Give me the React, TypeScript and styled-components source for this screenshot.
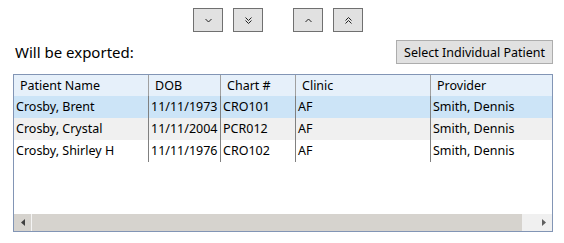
import React from "react";
import styled, {createGlobalStyle} from "styled-components";

const GlobalStyle = createGlobalStyle`
  body {
    margin: 0;
    background: #ffffff;
    font-family: "Segoe UI", "Noto Sans", sans-serif;
    color: #000000;
  }
`;

type Patient = {
  name: string;
  dob: string;
  chart: string;
  clinic: string;
  provider: string;
};

const patients: Patient[] = [
  {name: "Crosby, Brent", dob: "11/11/1973", chart: "CRO101", clinic: "AF", provider: "Smith, Dennis"},
  {name: "Crosby, Crystal", dob: "11/11/2004", chart: "PCR012", clinic: "AF", provider: "Smith, Dennis"},
  {name: "Crosby, Shirley H", dob: "11/11/1976", chart: "CRO102", clinic: "AF", provider: "Smith, Dennis"},
];

const columns = [
  {key: "name", title: "Patient Name", width: 135},
  {key: "dob", title: "DOB", width: 72},
  {key: "chart", title: "Chart #", width: 75},
  {key: "clinic", title: "Clinic", width: 135},
  {key: "provider", title: "Provider", width: 160},
] as const;

const Chevron = ({up, double}: {up?: boolean; double?: boolean}) => (
  <svg width="9" height="9" viewBox="0 0 9 9">
    <g fill="none" stroke="#222" strokeWidth="1" transform={up ? "rotate(180 4.5 4.5)" : undefined}>
      {double ? (
        <>
          <polyline points="1.5,1.5 4.5,4.5 7.5,1.5" />
          <polyline points="1.5,4.5 4.5,7.5 7.5,4.5" />
        </>
      ) : (
        <polyline points="1.5,3 4.5,6 7.5,3" />
      )}
    </g>
  </svg>
);

const App = () => {
  return (
    <Page>
      <GlobalStyle />
      <Toolbar>
        <ArrowButton><Chevron /></ArrowButton>
        <ArrowButton><Chevron double /></ArrowButton>
        <Spacer />
        <ArrowButton><Chevron up /></ArrowButton>
        <ArrowButton><Chevron up double /></ArrowButton>
      </Toolbar>
      <TitleRow>
        <Title>Will be exported:</Title>
        <SelectButton>Select Individual Patient</SelectButton>
      </TitleRow>
      <Grid>
        <Viewport>
          <HeadRow>
            {columns.map((c) => (
              <HeadCell key={c.key} $w={c.width}>{c.title}</HeadCell>
            ))}
          </HeadRow>
          {patients.map((p, i) => (
            <Row key={p.chart} $selected={i === 0} $alt={i % 2 === 1}>
              {columns.map((c) => (
                <Cell key={c.key} $w={c.width}>{p[c.key]}</Cell>
              ))}
            </Row>
          ))}
        </Viewport>
        <HScroll>
          <ScrollArrow $dark>
            <svg width="4" height="7" viewBox="0 0 4 7"><polygon points="4,0 0,3.5 4,7" fill="#404040" /></svg>
          </ScrollArrow>
          <Thumb />
          <Track />
          <ScrollArrow>
            <svg width="4" height="7" viewBox="0 0 4 7"><polygon points="0,0 4,3.5 0,7" fill="#606060" /></svg>
          </ScrollArrow>
        </HScroll>
      </Grid>
    </Page>
  );
};

const Page = styled.div`
  width: 564px;
  height: 243px;
  box-sizing: border-box;
  padding: 8px 11px 0 13px;
`;

const Toolbar = styled.div`
  display: flex;
  gap: 10px;
  padding-left: 180px;
`;

const Spacer = styled.div`
  width: 10px;
`;

const ArrowButton = styled.button`
  width: 30px;
  height: 24px;
  padding: 0;
  display: flex;
  align-items: center;
  justify-content: center;
  background: #e1e1e1;
  border: 1px solid #707070;
  border-radius: 0;
`;

const TitleRow = styled.div`
  display: flex;
  justify-content: space-between;
  align-items: flex-end;
  margin-top: 8px;
`;

const Title = styled.div`
  font-size: 15px;
  padding-left: 2px;
  padding-bottom: 2px;
`;

const SelectButton = styled.button`
  height: 24px;
  padding: 0 7px;
  font-family: inherit;
  font-size: 12.5px;
  color: #000;
  background: #e1e1e1;
  border: 1px solid #adadad;
  border-radius: 0;
`;

const Grid = styled.div`
  margin-top: 10px;
  height: 158px;
  box-sizing: border-box;
  border: 1px solid #8295b5;
  display: flex;
  flex-direction: column;
`;

const Viewport = styled.div`
  flex: 1;
  overflow: hidden;
`;

const HeadRow = styled.div`
  display: flex;
  height: 21px;
  background: #e6f0fa;
  width: max-content;
`;

const HeadCell = styled.div<{$w: number}>`
  width: ${(p) => p.$w}px;
  flex: none;
  box-sizing: border-box;
  border-right: 1px solid #a0a0a0;
  padding-left: 6px;
  font-size: 12.5px;
  line-height: 21px;
  white-space: nowrap;
`;

const Row = styled.div<{$selected?: boolean; $alt?: boolean}>`
  display: flex;
  height: 22px;
  width: max-content;
  background: ${(p) => (p.$selected ? "#cce4f7" : p.$alt ? "#f0f0f0" : "#ffffff")};
`;

const Cell = styled.div<{$w: number}>`
  width: ${(p) => p.$w}px;
  flex: none;
  box-sizing: border-box;
  border-right: 1px solid #808080;
  padding-left: 2px;
  font-size: 12.5px;
  line-height: 22px;
  white-space: nowrap;
  overflow: hidden;
`;

const HScroll = styled.div`
  display: flex;
  height: 17px;
  background: #f0f0f0;
`;

const ScrollArrow = styled.div<{$dark?: boolean}>`
  width: 17px;
  flex: none;
  display: flex;
  align-items: center;
  justify-content: center;
  background: ${(p) => (p.$dark ? "#d6d3ce" : "#f0f0f0")};
`;

const Thumb = styled.div`
  flex: 1;
  background: #d6d3ce;
  border-left: 1px solid #f4f4f4;
`;

const Track = styled.div`
  width: 13px;
`;

export default App;
